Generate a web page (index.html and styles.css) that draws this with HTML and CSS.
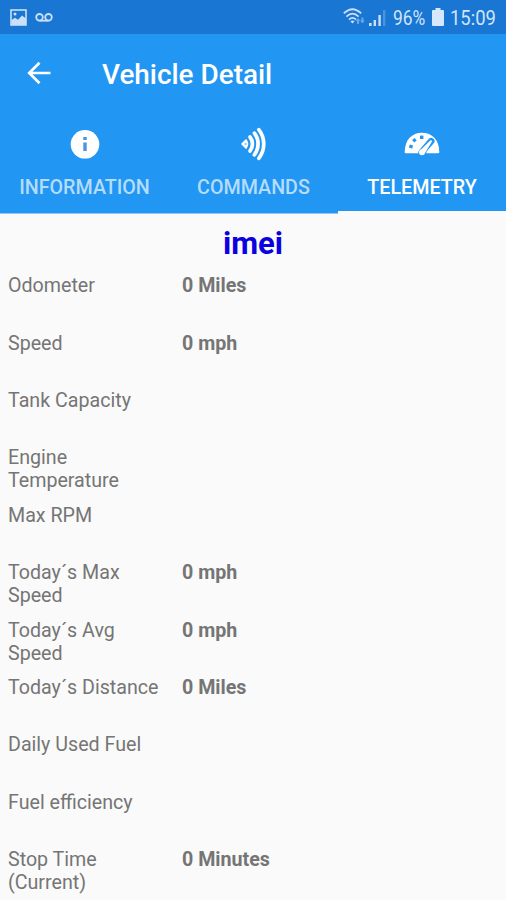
FILE: index.html
```
<!DOCTYPE html>
<html lang="en">
<head>
  <meta charset="UTF-8" />
  <meta name="viewport" content="width=device-width, initial-scale=1.0"/>
  <title>Vehicle Detail</title>
  <link rel="stylesheet" href="styles.css">
</head>
<body>

  <div class="status-bar">
    <svg class="icon-picture" width="17" height="17" viewBox="0 0 17 17">
      <rect x="1" y="1" width="15" height="15" fill="none" stroke="#c9e0f8" stroke-width="1.6"/>
      <path d="M1.5 11 L5 8.8 L8 10.8 L12 6.5 L16 9.5 V16 H1.5z" fill="#c9e0f8"/>
      <circle cx="5" cy="5" r="1.5" fill="#c9e0f8"/>
    </svg>
    <svg class="icon-voicemail" width="18" height="9" viewBox="0 0 18 9">
      <g fill="none" stroke="#c9e0f8" stroke-width="1.8">
        <circle cx="4.5" cy="4.3" r="3.3"/>
        <circle cx="13.5" cy="4.3" r="3.3"/>
        <path d="M4.5 7.7 H13.5"/>
      </g>
    </svg>
    <div class="status-right">
      <svg width="24" height="18" viewBox="0 0 24 18">
        <g fill="none" stroke="#c9e0f8" stroke-width="1.8">
          <path d="M.8 5.4 Q9.5 -3 18.2 5.4"/>
          <path d="M3.4 8.6 Q9.5 2.6 15.6 8.6"/>
          <path d="M6 11.6 Q9.5 8.2 13 11.6"/>
        </g>
        <path d="M7.4 13.2 Q9.5 11.6 11.6 13.2 L9.5 15.6z" fill="#c9e0f8"/>
        <path d="M12.6 13 l2.4 -3 2.4 3 h-1.4 v3 h-2 v-3z M17 12.5 h1.4 v-3 h2 v3 h1.4 l-2.4 3z" fill="#6aa7e6"/>
      </svg>
      <svg class="icon-signal" width="17" height="17" viewBox="0 0 17 17">
        <path d="M0 14 h2.6 v3 H0z M4.6 11 h2.4 v6 H4.6z M9.4 6 h2.4 v11 H9.4z" fill="#c9e0f8"/>
        <path d="M14 1 h2.4 v16 H14z" fill="#4b92df"/>
      </svg>
      <span class="battery-text">96%</span>
      <svg class="icon-battery" width="12" height="18" viewBox="0 0 12 18">
        <path d="M3.5 0 h5 v2 H11 q1 0 1 1 V17 q0 1 -1 1 H1 q-1 0 -1 -1 V3 q0 -1 1 -1 h2.5z" fill="#d6e8fb"/>
      </svg>
      <span class="clock">15:09</span>
    </div>
  </div>

  <div class="header">
    <div class="toolbar">
      <svg class="back" width="24" height="24" viewBox="0 0 24 24">
        <path d="M23.5 12 H2.5 M12.5 1.7 L2.2 12 L12.5 22.3" fill="none" stroke="#fff" stroke-width="2.7"/>
      </svg>
      <h1>Vehicle Detail</h1>
    </div>

    <div class="tabs">
      <div class="tab">
        <svg width="36" height="36" viewBox="0 0 36 36">
          <circle cx="18" cy="18.3" r="14.3" fill="#fff"/>
          <path d="M16.3 11 h3.4 v2.9 h-3.4z M16.3 16.4 h3.4 v8.6 h-3.4z" fill="#4a94e0"/>
        </svg>
        <span>INFORMATION</span>
      </div>
      <div class="tab">
        <svg width="36" height="36" viewBox="0 0 36 36">
          <path d="M6 18 L10 14 Q13 18 10 22z" fill="#fff" stroke="#fff" stroke-width="1.6" stroke-linejoin="round"/>
          <circle cx="9.6" cy="18" r="1.1" fill="#7fbdf5"/>
          <g fill="none" stroke="#fff" stroke-width="3.7" stroke-linecap="round">
            <path d="M14 11 C17.2 15 17.2 21 14 25"/>
            <path d="M18.4 7.2 C23.3 13.4 23.3 22.6 18.4 28.8"/>
            <path d="M22.8 3.6 C29.4 12 29.4 24 22.8 32.4"/>
          </g>
        </svg>
        <span>COMMANDS</span>
      </div>
      <div class="tab active">
        <svg width="36" height="36" viewBox="0 0 36 36">
          <path d="M1.8 27.3 Q.7 27.3 .7 26 C.7 14 8 6.8 18 6.8 S35.3 14 35.3 26 Q35.3 27.3 34.2 27.3z" fill="#fff"/>
          <g fill="#2196f3">
            <rect x="16" y="9.6" width="3.4" height="3.4"/>
            <rect x="8.8" y="12.6" width="3.2" height="3.2" transform="rotate(-40 10.4 14.2)"/>
            <rect x="5.3" y="19" width="3.4" height="3.2" transform="rotate(15 7 20.6)"/>
          </g>
          <path d="M18 25.8 L27.2 15.2" stroke="#2196f3" stroke-width="6.6" stroke-linecap="round"/>
          <path d="M14.4 25.6 h8 v3 h-8z" fill="#2196f3"/>
          <path d="M15.6 25 L26.2 14.4 Q28.2 13.6 28 15.6 L20.9 27.3z" fill="#fff"/>
          <circle cx="18" cy="26.3" r="3" fill="#fff"/>
        </svg>
        <span>TELEMETRY</span>
      </div>
    </div>
  </div>

  <div class="content">
    <h2>imei</h2>
    <div class="row"><div class="label">Odometer</div><div class="value">0 Miles</div></div>
    <div class="row"><div class="label">Speed</div><div class="value">0 mph</div></div>
    <div class="row"><div class="label">Tank Capacity</div><div class="value"></div></div>
    <div class="row"><div class="label">Engine Temperature</div><div class="value"></div></div>
    <div class="row"><div class="label">Max RPM</div><div class="value"></div></div>
    <div class="row"><div class="label">Today´s Max Speed</div><div class="value">0 mph</div></div>
    <div class="row"><div class="label">Today´s Avg Speed</div><div class="value">0 mph</div></div>
    <div class="row"><div class="label">Today´s Distance</div><div class="value">0 Miles</div></div>
    <div class="row"><div class="label">Daily Used Fuel</div><div class="value"></div></div>
    <div class="row"><div class="label">Fuel efficiency</div><div class="value"></div></div>
    <div class="row"><div class="label">Stop Time (Current)</div><div class="value">0 Minutes</div></div>
  </div>

</body>
</html>
```
FILE: styles.css
```
* {
  box-sizing: border-box;
}

body {
  margin: 0;
  height: 900px;
  overflow: hidden;
  display: flex;
  flex-direction: column;
  background-color: #fafafa;
  font-family: Roboto, sans-serif;
}

svg {
  display: block;
  flex-shrink: 0;
}

.status-bar {
  height: 34px;
  flex-shrink: 0;
  display: flex;
  align-items: center;
  padding: 0 10px 0 10px;
  background-color: #1976d2;
  color: #d0e5fa;
  font-size: 20px;
}

.icon-voicemail {
  margin-left: 8px;
}

.status-right {
  display: flex;
  align-items: center;
  margin-left: auto;
}

.icon-signal {
  margin-left: 2px;
}

.battery-text,
.clock {
  margin-top: 2px;
  transform-origin: left center;
}

.battery-text {
  width: 33px;
  margin-left: 7px;
  transform: scaleX(0.87);
}

.icon-battery {
  margin: 0 6px 0 6px;
}

.clock {
  width: 46px;
  transform: scaleX(0.92);
}

.header {
  height: 180px;
  flex-shrink: 0;
  background-color: #2196f3;
  border-bottom: 1px solid #8fc8f7;
}

.toolbar {
  height: 78px;
  display: flex;
  align-items: center;
  padding-left: 27px;
}

.toolbar h1 {
  margin: 3px 0 0 51px;
  color: #fff;
  font-size: 27.9px;
  font-weight: 500;
}

.tabs {
  height: 102px;
  display: flex;
}

.tab {
  width: 169px;
  display: flex;
  flex-direction: column;
  align-items: center;
  padding-top: 14px;
  color: #b5dcfb;
  font-size: 19.7px;
  font-weight: 500;
}

.tab span {
  margin-top: 14px;
  line-height: 24px;
}

.tab.active {
  width: 168px;
  color: #fff;
  border-bottom: 3px solid #fafafa;
}

.content {
  padding: 12px 8px 0;
  color: #757575;
  font-size: 19.65px;
}

.content h2 {
  margin: 0;
  height: 48.3px;
  line-height: 35px;
  text-align: center;
  color: #0b00e0;
  font-size: 31px;
  font-weight: 700;
}

.row {
  height: 57.4px;
  display: flex;
  line-height: 23px;
}

.label {
  width: 174px;
  padding-right: 20px;
}

.value {
  font-weight: 700;
}
```
